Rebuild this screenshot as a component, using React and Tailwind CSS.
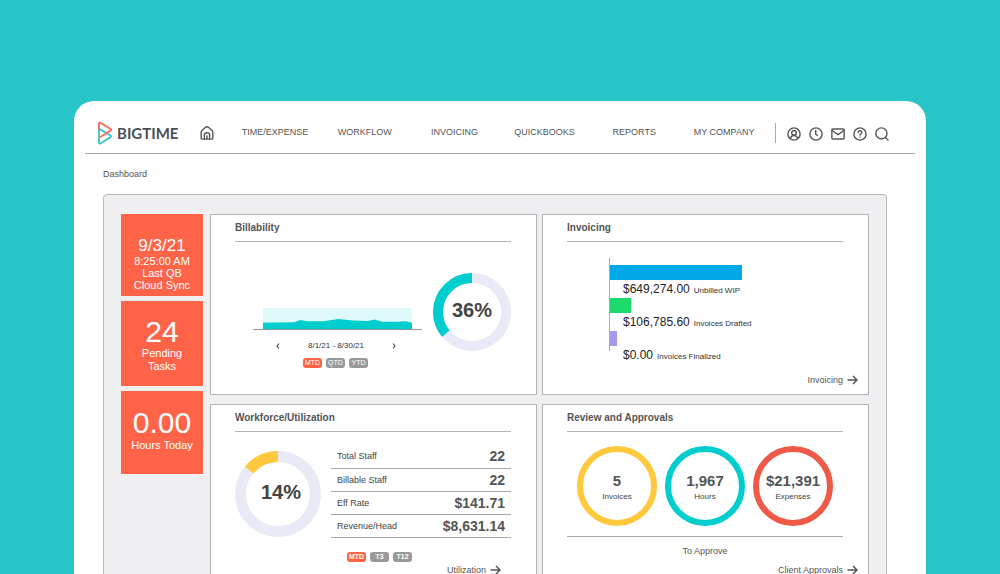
import React from "react";

const AREA = "M0 15.5 L31 15 L37 12.5 L44 14 L60 14 L75 11.5 L90 13 L104 13.5 L111 12 L118 14.5 L134 14.5 L142 14 L148 15.5 V22 H0 Z";

function Icon({ children, className = "size-[14px]" }) {
  return (
    <svg
      viewBox="0 0 24 24"
      className={className}
      fill="none"
      stroke="currentColor"
      strokeWidth="2.4"
      strokeLinecap="round"
      strokeLinejoin="round"
      aria-hidden="true"
    >
      {children}
    </svg>
  );
}

const TOOLS = [
  {
    name: "Account",
    art: (
      <>
        <circle cx="12" cy="12" r="10.5" />
        <circle cx="12" cy="10" r="4" />
        <path d="M5.5 19.5 C7 16 9 14.5 12 14.5 C15 14.5 17 16 18.5 19.5" />
      </>
    ),
  },
  {
    name: "Timer",
    art: (
      <>
        <circle cx="12" cy="12" r="10.5" />
        <path d="M11.5 6 V12.5 L14.5 14.5" />
      </>
    ),
  },
  {
    name: "Messages",
    art: (
      <>
        <rect x="1.5" y="3.5" width="21" height="17" rx="1.5" />
        <path d="M2 6 L12 13 L22 6" />
      </>
    ),
  },
  {
    name: "Help",
    art: (
      <>
        <circle cx="12" cy="12" r="10.5" />
        <path d="M9 9.5 A3 3 0 1 1 13.5 12 C12.4 12.7 12 13 12 14" />
        <path d="M12 17.3 V17.4" />
      </>
    ),
  },
  {
    name: "Search",
    art: (
      <>
        <circle cx="11" cy="11" r="9.5" />
        <path d="M18 18 L22.5 22.5" />
      </>
    ),
  },
];

const NAV = ["TIME/EXPENSE", "WORKFLOW", "INVOICING", "QUICKBOOKS", "REPORTS", "MY COMPANY"];

const BARS = [
  { amount: "$649,274.00", label: "Unbilled WIP", bar: "w-[132px] bg-[#00a8e8]" },
  { amount: "$106,785.60", label: "Invoices Drafted", bar: "w-[21px] bg-[#1ed96b]" },
  { amount: "$0.00", label: "Invoices Finalized", bar: "w-[7px] bg-[#a698ea]" },
];

const STAFF = [
  ["Total Staff", "22"],
  ["Billable Staff", "22"],
  ["Eff Rate", "$141.71"],
  ["Revenue/Head", "$8,631.14"],
];

const RINGS = [
  { value: "5", label: "Invoices", color: "border-[#ffc83d]" },
  { value: "1,967", label: "Hours", color: "border-[#00cdcd]" },
  { value: "$21,391", label: "Expenses", color: "border-[#ee5a47]" },
];

function Logo() {
  return (
    <a href="#home" className="flex w-20 items-center gap-1 text-[#4a4f54]">
      <svg viewBox="0 0 16 24" className="h-6 w-4 shrink-0" fill="none" strokeWidth="1.9" strokeLinejoin="round" strokeLinecap="round" aria-hidden="true">
        <path stroke="#3cc8d0" d="M2 9.5 Q2 7.6 3.6 8.6 L13.6 14.5 Q14.8 15.3 13.6 16.1 L3.8 22.3 Q2 23.2 2 21.4 Z" />
        <path stroke="#f8705c" d="M2 8 V3 Q2 1 3.8 1.9 L13.6 8 Q14.8 8.8 13.6 9.6 L3.4 16" />
      </svg>
      <span className="font-['Lato',sans-serif] text-[15px] leading-none font-bold">BIGTIME</span>
    </a>
  );
}

function Tile({ big, bigClass, children, className }) {
  return (
    <section className={`flex flex-col items-center bg-[#ff6448] text-center text-[11px] text-white ${className}`}>
      <strong className={`font-normal ${bigClass}`}>{big}</strong>
      {children}
    </section>
  );
}

function Card({ title, children }) {
  return (
    <section className="flex min-h-[181px] flex-col border border-[#b4b4b6] bg-white pr-[25px] pl-6">
      <h2 className="h-[27px] border-b border-[#b4b4b6] text-[10px] leading-[26px] font-bold text-[#555]">{title}</h2>
      {children}
    </section>
  );
}

function Donut({ percent, size, width, color, labelClass = "" }) {
  const r = (size - width) / 2;
  const c = size / 2;
  return (
    <div className="grid shrink-0 place-items-center">
      <svg viewBox={`0 0 ${size} ${size}`} width={size} height={size} className="col-start-1 row-start-1" fill="none" strokeWidth={width} aria-hidden="true">
        <circle cx={c} cy={c} r={r} stroke="#e8eaf6" />
        <circle
          cx={c}
          cy={c}
          r={r}
          stroke={color}
          pathLength="100"
          strokeDasharray={`${percent} 100`}
          transform={`translate(${size} 0) scale(-1 1) rotate(-90 ${c} ${c})`}
        />
      </svg>
      <span className={`col-start-1 row-start-1 pb-1 text-xl leading-none font-bold text-[#444] ${labelClass}`}>{percent}%</span>
    </div>
  );
}

function Pills({ items, bold, className = "" }) {
  return (
    <div className={`flex justify-center gap-1 ${className}`}>
      {items.map((item, i) => (
        <button
          key={item}
          type="button"
          className={`h-[10px] w-[19px] rounded-[3px] text-[7px] leading-[10px] whitespace-nowrap text-white ${bold ? "font-bold" : ""} ${
            i === 0 ? "bg-[#ff6448]" : "bg-[#999]"
          }`}
        >
          {item}
        </button>
      ))}
    </div>
  );
}

function More({ children, className }) {
  return (
    <a href="#more" className={`flex items-center justify-end gap-1 text-[9px] leading-3 text-[#555] ${className}`}>
      {children}
      <svg viewBox="0 0 11 10" className="h-[10px] w-[11px]" fill="none" stroke="#555" strokeWidth="1.5" aria-hidden="true">
        <path d="M0.5 5 H10 M6 1 L10 5 L6 9" />
      </svg>
    </a>
  );
}

function Chevron({ d, label }) {
  return (
    <button type="button" aria-label={label} className="flex h-3 w-2 items-center justify-center">
      <svg viewBox="0 0 4 6" className="h-[6px] w-1" fill="none" stroke="#444" strokeWidth="1.1">
        <path d={d} />
      </svg>
    </button>
  );
}

export default function App() {
  return (
    <div className="flex h-screen flex-col overflow-hidden bg-[#27c4c8] px-[74px] pt-[101px] font-['Liberation_Sans',Arial,sans-serif]">
      <div className="flex-1 rounded-t-[20px] bg-white px-[11px]">
        <header className="flex h-[53px] items-center border-b border-[#aaa] pt-3 pr-[26px] pl-3 text-[#555]">
          <Logo />
          <a href="#home" aria-label="Home" className="ml-[23px]">
            <Icon>
              <path d="M2 10.5 Q2 9 3 8 L9.5 2.3 Q12 0.5 14.5 2.3 L21 8 Q22 9 22 10.5 V20.5 Q22 22.5 20 22.5 H4 Q2 22.5 2 20.5 Z" />
              <path d="M7.5 22 V15 Q7.5 11.5 12 11.5 Q16.5 11.5 16.5 15 V22 M12 17 V22" />
            </Icon>
          </a>
          <nav className="ml-4 grid flex-1 grid-cols-6 pb-[2px] text-center text-[9px] leading-3 whitespace-nowrap text-[#555]">
            {NAV.map((n) => (
              <a key={n} href="#nav">{n}</a>
            ))}
          </nav>
          <div className="ml-[6px] flex items-center gap-2 border-l border-[#aaa] pl-[11px]">
            {TOOLS.map((t) => (
              <button key={t.name} type="button" aria-label={t.name} className="flex h-5 items-center pt-[2px]">
                <Icon>{t.art}</Icon>
              </button>
            ))}
          </div>
        </header>

        <main className="pr-7 pl-[18px]">
          <h1 className="pt-[14px] pb-[14px] text-[9px] leading-3 text-[#555]">Dashboard</h1>
          <div className="flex gap-[7px] rounded-[4px] border border-[#b8b8b8] bg-[#efeff1] px-[17px] pt-[19px] pb-[18px]">
            <aside className="flex w-[82px] shrink-0 flex-col gap-[5px]">
              <Tile big="9/3/21" bigClass="text-[17px] leading-[18px]" className="h-[82px] pt-[23px] leading-3">
                <span>8:25:00 AM</span>
                <span>Last QB</span>
                <span>Cloud Sync</span>
              </Tile>
              <Tile big="24" bigClass="text-[30px] leading-[30px]" className="h-[85px] px-4 pt-4 leading-[13px]">
                <span>Pending Tasks</span>
              </Tile>
              <Tile big="0.00" bigClass="text-[30px] leading-[32px]" className="h-[83px] pt-4 leading-[13px]">
                <span>Hours Today</span>
              </Tile>
            </aside>

            <div className="grid flex-1 grid-cols-2 gap-x-[5px] gap-y-[9px]">
              <Card title="Billability">
                <div className="flex items-start justify-between pt-[31px] pl-[18px]">
                  <div className="w-[169px] pt-[35px]">
                    <div className="border-b border-[#999] px-[10px]">
                      <svg viewBox="0 0 148 22" preserveAspectRatio="none" className="block h-[21px] w-full" aria-hidden="true">
                        <path d="M0 0 H148 V22 H0 Z" fill="#dffafb" />
                        <path d={AREA} fill="#00cdcd" />
                      </svg>
                    </div>
                    <div className="flex items-center justify-between pt-[10px] pr-6 pl-[21px] text-[8px] leading-3 text-[#333]">
                      <Chevron label="Previous period" d="M3 0.5 L1 3 L3 5.5" />
                      <span>8/1/21 - 8/30/21</span>
                      <Chevron label="Next period" d="M1 0.5 L3 3 L1 5.5" />
                    </div>
                    <Pills className="pt-[6px] pr-1" items={["MTD", "QTD", "YTD"]} />
                  </div>
                  <Donut percent={36} size={78} width={10} color="#00cdcd" />
                </div>
              </Card>

              <Card title="Invoicing">
                <div className="flex pt-4 pl-[42px]">
                  <div className="h-[93px] w-px bg-[#aaa]" />
                  <ul className="pt-[7px]">
                    {BARS.map((b) => (
                      <li key={b.label} className="h-[33px]">
                        <div className={`h-[15px] ${b.bar}`} />
                        <p className="flex items-baseline gap-1 pl-[13px] text-[8px] leading-[18px] whitespace-nowrap text-[#333]">
                          <span className="text-xs leading-[18px] text-[#222]">{b.amount}</span>
                          <span>{b.label}</span>
                        </p>
                      </li>
                    ))}
                  </ul>
                </div>
                <More className="-mr-[15px] pt-[10px]">Invoicing</More>
              </Card>

              <Card title="Workforce/Utilization">
                <div className="flex items-start justify-between pt-[13px]">
                  <div className="pt-[6px]">
                    <Donut percent={14} size={86} width={11} color="#ffc83d" labelClass="pl-[6px]" />
                  </div>
                  <table className="w-[180px] border-collapse">
                    <tbody>
                      {STAFF.map(([label, value]) => (
                        <tr key={label} className="h-[23px] border-b border-[#aaa]">
                          <th scope="row" className="p-0 pl-[6px] text-left text-[9px] leading-3 font-normal text-[#444]">{label}</th>
                          <td className="p-0 pr-[6px] text-right text-sm leading-4 font-bold text-[#555]">{value}</td>
                        </tr>
                      ))}
                    </tbody>
                  </table>
                </div>
                <Pills className="pt-[14px] pl-[13px]" bold items={["MTD", "T3", "T12"]} />
                <More className="pt-[2px] pr-[10px] pb-2">Utilization</More>
              </Card>

              <Card title="Review and Approvals">
                <div className="flex justify-center gap-2 border-b border-[#aaa] pt-[14px] pb-[10px]">
                  {RINGS.map((r) => (
                    <div key={r.label} className={`flex size-20 flex-col items-center rounded-full border-[6px] pt-5 ${r.color}`}>
                      <strong className="text-[15px] leading-[17px] text-[#555]">{r.value}</strong>
                      <span className="pt-[2px] text-[8px] leading-3 text-[#444]">{r.label}</span>
                    </div>
                  ))}
                </div>
                <p className="pt-2 text-center text-[9px] leading-3 text-[#555]">To Approve</p>
                <More className="-mr-[15px] pt-[7px] pb-2">Client Approvals</More>
              </Card>
            </div>
          </div>
        </main>
      </div>
    </div>
  );
}
